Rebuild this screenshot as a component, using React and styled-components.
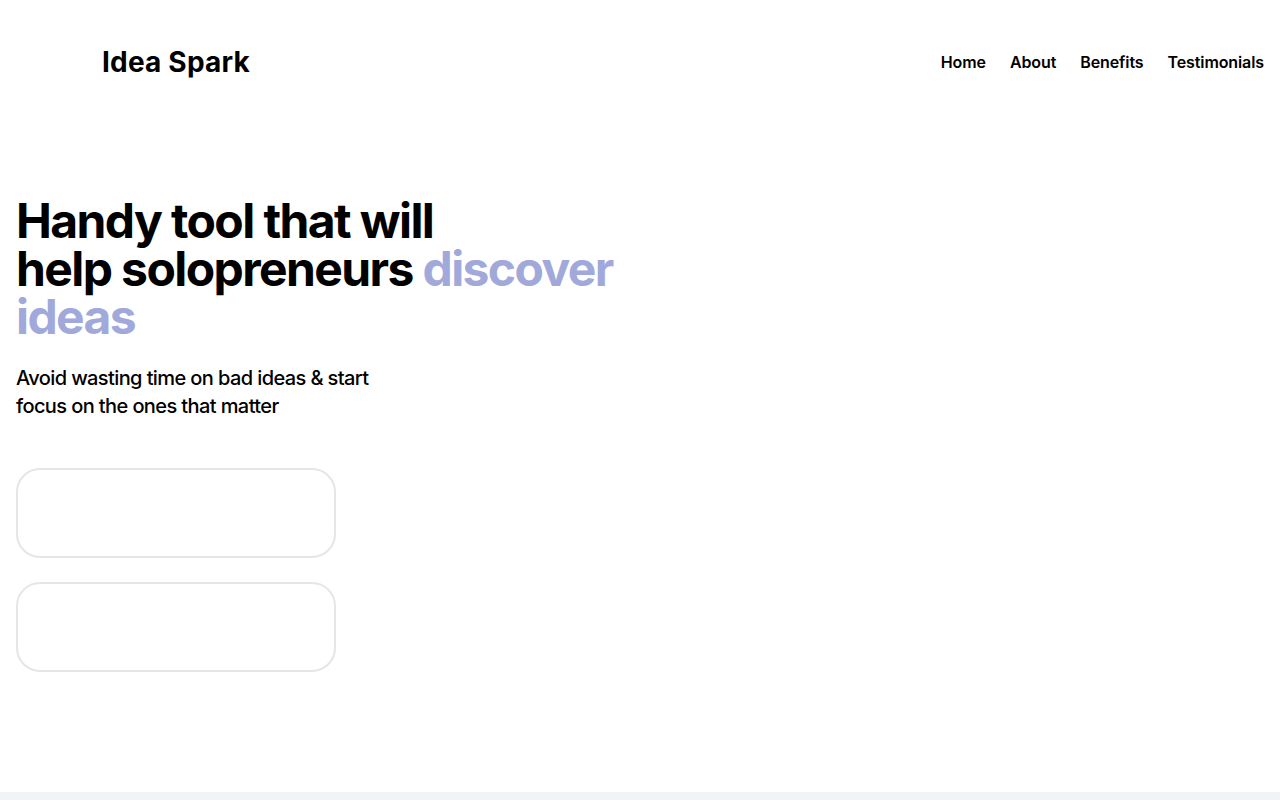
import React from "react";
import styled, { createGlobalStyle } from "styled-components";

const Global = createGlobalStyle`
  html, body { margin: 0; padding: 0; background: #f2f3f5; }
  body { font-family: Inter, "Noto Sans", sans-serif; color: #000; }
  * { box-sizing: border-box; }
`;

const Page = styled.div`
  background: #fff;
  min-height: 792px;
  display: flex;
  flex-direction: column;
`;

const Header = styled.header`
  height: 124px;
  display: flex;
  align-items: center;
  justify-content: space-between;
  padding: 0 16px 0 102px;
`;

const Logo = styled.div`
  font-size: 28px;
  font-weight: 700;
  letter-spacing: 0.2px;
`;

const Nav = styled.nav`
  display: flex;
  gap: 24px;
`;

const NavLink = styled.a`
  font-size: 16px;
  font-weight: 600;
  letter-spacing: -0.1px;
  color: #000;
  text-decoration: none;
`;

const Hero = styled.section`
  padding: 73px 16px 0;
  display: flex;
  flex-direction: column;
`;

const Title = styled.h1`
  margin: 0;
  font-size: 48px;
  line-height: 48px;
  font-weight: 700;
  letter-spacing: -1.6px;
  max-width: 620px;
`;

const Accent = styled.span`
  color: #a1a9db;
`;

const Sub = styled.p`
  margin: 23px 0 0;
  font-size: 20px;
  line-height: 28px;
  font-weight: 500;
  letter-spacing: -0.6px;
  max-width: 370px;
`;

const Cards = styled.div`
  margin-top: 48px;
  display: flex;
  flex-direction: column;
  gap: 24px;
`;

const Card = styled.div`
  width: 320px;
  height: 90px;
  border: 2px solid #e5e5ea;
  border-radius: 24px;
`;

export default function App() {
  return (
    <>
      <Global />
      <Page>
        <Header>
          <Logo>Idea Spark</Logo>
          <Nav>
            <NavLink href="#">Home</NavLink>
            <NavLink href="#">About</NavLink>
            <NavLink href="#">Benefits</NavLink>
            <NavLink href="#">Testimonials</NavLink>
          </Nav>
        </Header>
        <Hero>
          <Title>
            Handy tool that will
            <br />
            help solopreneurs <Accent>discover ideas</Accent>
          </Title>
          <Sub>Avoid wasting time on bad ideas &amp; start focus on the ones that matter</Sub>
          <Cards>
            <Card />
            <Card />
          </Cards>
        </Hero>
      </Page>
    </>
  );
}
